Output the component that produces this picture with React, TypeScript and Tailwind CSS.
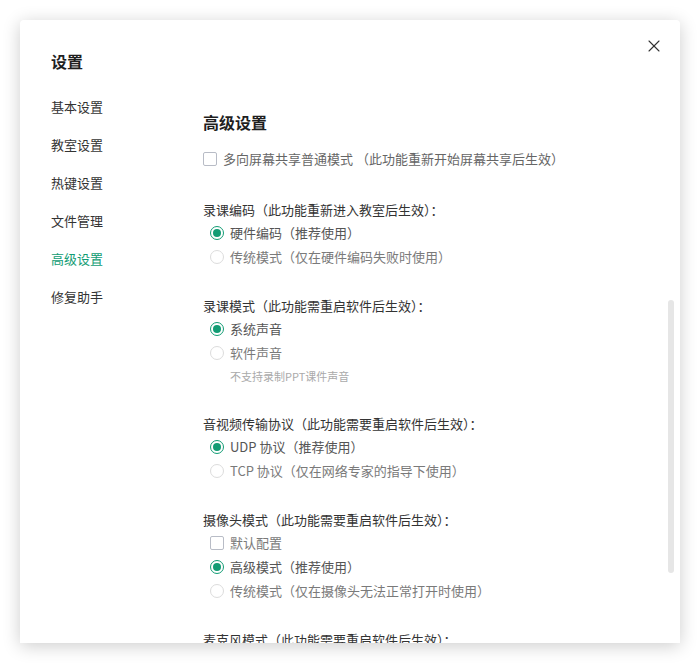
import { X } from 'lucide-react'

const menu = ['基本设置', '教室设置', '热键设置', '文件管理', '高级设置', '修复助手']

type Opt = { kind: 'radio' | 'check'; label: string; on?: boolean }

const sections: { title: string; options: Opt[]; hint?: string }[] = [
  {
    title: '录课编码（此功能重新进入教室后生效）：',
    options: [
      { kind: 'radio', label: '硬件编码（推荐使用）', on: true },
      { kind: 'radio', label: '传统模式（仅在硬件编码失败时使用）' },
    ],
  },
  {
    title: '录课模式（此功能需重启软件后生效）：',
    options: [
      { kind: 'radio', label: '系统声音', on: true },
      { kind: 'radio', label: '软件声音' },
    ],
    hint: '不支持录制PPT课件声音',
  },
  {
    title: '音视频传输协议（此功能需要重启软件后生效）：',
    options: [
      { kind: 'radio', label: 'UDP 协议（推荐使用）', on: true },
      { kind: 'radio', label: 'TCP 协议（仅在网络专家的指导下使用）' },
    ],
  },
  {
    title: '摄像头模式（此功能需要重启软件后生效）：',
    options: [
      { kind: 'check', label: '默认配置' },
      { kind: 'radio', label: '高级模式（推荐使用）', on: true },
      { kind: 'radio', label: '传统模式（仅在摄像头无法正常打开时使用）' },
    ],
  },
  // last one is cut off by the panel edge, only its title peeks in
  { title: '麦克风模式（此功能需要重启软件后生效）：', options: [] },
]

function Radio({ on }: { on?: boolean }) {
  return on ? (
    <span className="w-[14px] h-[14px] rounded-full border border-[#129c74] flex items-center justify-center shrink-0">
      <span className="w-[8px] h-[8px] rounded-full bg-[#129c74]"></span>
    </span>
  ) : (
    <span className="w-[14px] h-[14px] rounded-full border border-[#dcdcdc] shrink-0"></span>
  )
}

function Check() {
  return <span className="w-[14px] h-[14px] rounded-[2px] border border-[#b8bcc6] shrink-0"></span>
}

export default function App() {
  return (
    <div className="w-[700px] h-[664px] bg-white pt-[20px] pl-[20px] font-['Noto_Sans_CJK_SC','Microsoft_YaHei',sans-serif]">
      <div className="relative w-[660px] h-[623px] bg-white rounded-t-[4px] shadow-[0_3px_18px_rgba(0,0,0,0.2)] overflow-hidden flex">
        <button className="absolute right-[16px] top-[16px] text-[#333]">
          <X size={20} strokeWidth={1.3} />
        </button>

        <aside className="w-[183px] shrink-0 pl-[31px] pt-[29px]">
          <h1 className="h-[24px] leading-[24px] text-[16px] font-bold text-[#1f1f1f]">设置</h1>
          <ul className="mt-[15px]">
            {menu.map((m) => (
              <li
                key={m}
                className={`h-[38px] flex items-center text-[13px] ${m === '高级设置' ? 'text-[#129c74]' : 'text-[#333]'}`}
              >
                {m}
              </li>
            ))}
          </ul>
        </aside>

        <main className="flex-1 pt-[90px] text-[13px]">
          <h2 className="h-[24px] leading-[24px] text-[16px] font-bold text-[#1f1f1f]">高级设置</h2>
          <label className="mt-[13px] h-[24px] flex items-center gap-[6px] text-[#666]">
            <Check />
            <span>多向屏幕共享普通模式 （此功能重新开始屏幕共享后生效）</span>
          </label>

          <div className="mt-[28px] space-y-[26px]">
            {sections.map((s) => (
              <section key={s.title}>
                <h3 className="h-[22px] leading-[21px] text-[#333]">{s.title}</h3>
                {s.options.map((o, i) => (
                  <div key={i} className="h-[24px] pl-[7px] flex items-center gap-[6px]">
                    {o.kind === 'radio' ? <Radio on={o.on} /> : <Check />}
                    <span className={o.on ? 'text-[#555]' : 'text-[#7a7a7a]'}>{o.label}</span>
                  </div>
                ))}
                {s.hint && (
                  <p className="h-[22px] pl-[27px] flex items-center text-[11px] text-[#aaa]">{s.hint}</p>
                )}
              </section>
            ))}
          </div>
        </main>

        <div className="absolute right-[6px] top-[280px] w-[6px] h-[273px] rounded-full bg-[#e6e6e6]"></div>
      </div>
    </div>
  )
}
